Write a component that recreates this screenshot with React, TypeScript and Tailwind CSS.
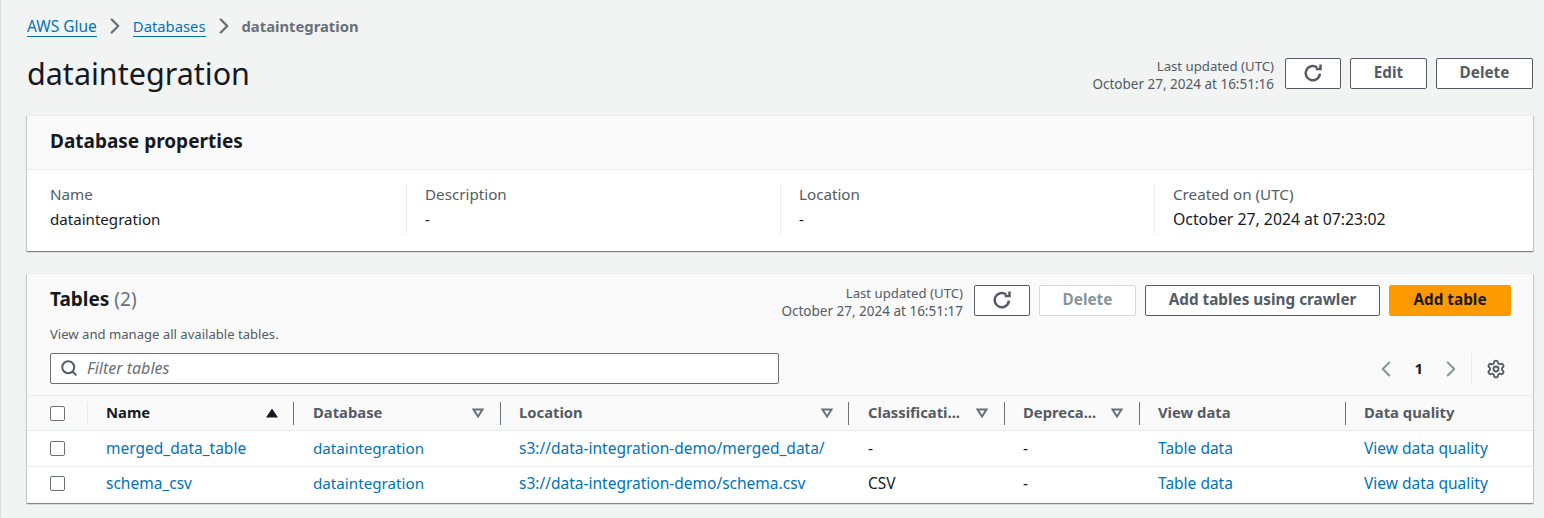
import React from "react"
import { ChevronLeft, ChevronRight, Search, Settings } from "lucide-react"

const columns = [
  { label: "Name", sorted: true, cell: "pl-[18px] pr-[17px]" },
  { label: "Database", cell: "pl-[18px] pr-[18px]" },
  { label: "Location", cell: "pl-[17px] pr-[17px]" },
  { label: "Classificati...", cell: "pl-[18px] pr-[18px]" },
  { label: "Depreca...", cell: "pl-[17px] pr-[18px]" },
  { label: "View data", plain: true, cell: "pl-[17px]" },
  { label: "Data quality", plain: true, last: true, cell: "pl-[17px]" },
]

const rows = [
  { name: "merged_data_table", location: "s3://data-integration-demo/merged_data/", type: "-" },
  { name: "schema_csv", location: "s3://data-integration-demo/schema.csv", type: "CSV" },
]

const gridCols = "grid grid-cols-[61px_207px_207px_348px_156px_135px_206px_1fr]"

function Refresh({ className = "w-[20px] h-[20px]" }: { className?: string }) {
  return (
    <svg viewBox="0 0 16 16" fill="none" stroke="currentColor" strokeWidth="2" className={className}>
      <path d="M13.5 8.5a5.7 5.7 0 1 1-2.2-4.9" />
      <path d="M14 1.2v3.6h-3.8" />
    </svg>
  )
}

function Button({ children, className = "" }: { children: React.ReactNode; className?: string }) {
  return (
    <button className={`h-[31px] mt-[1px] pb-[2px] flex items-center justify-center rounded-[2px] border border-[#545b64] bg-white text-[15.3px] font-bold text-[#545b64] ${className}`}>
      {children}
    </button>
  )
}

function Checkbox() {
  return <span className="block w-[15px] h-[15px] rounded-[2px] border border-[#687078] bg-white" />
}

function Updated({ time, className = "" }: { time: string; className?: string }) {
  return (
    <div className={`text-right leading-[18px] text-[#545b64] ${className}`}>
      <div className="text-[13.2px]">Last updated (UTC)</div>
      <div className="text-[13.5px]">October 27, 2024 at {time}</div>
    </div>
  )
}

function Prop({ label, value, first, valueClass = "text-[15.1px]" }: { label: string; value: string; first?: boolean; valueClass?: string }) {
  return (
    <div className={`h-[50px] ${first ? "" : "border-l border-[#eaeded] pl-[18px]"}`}>
      <div className="text-[15.2px] leading-[22px] text-[#545b64] mt-[-1px]">{label}</div>
      <div className={`leading-[27px] mt-[1px] text-[#16191f] ${valueClass}`}>{value}</div>
    </div>
  )
}

export default function App() {
  return (
    <div className="h-[518px] w-[1544px] overflow-hidden bg-[#f2f3f3] border-l border-[#d5dbdb] pl-[26px] pr-[11px] font-['Noto_Sans','Open_Sans',sans-serif]">
      {/* Breadcrumbs */}
      <nav className="flex items-center h-[22px] pt-[15px] box-content text-[15px] text-[#0073bb]">
        <a className="border-b border-[#0073bb] leading-[20px] text-[15.5px]">AWS Glue</a>
        <ChevronRight className="w-[26px] h-[26px] mx-[5px] text-[#687078]" strokeWidth={2.2} />
        <a className="border-b border-[#0073bb] leading-[20px] text-[14.8px]">Databases</a>
        <ChevronRight className="w-[26px] h-[26px] mx-[5px] text-[#687078]" strokeWidth={2.2} />
        <span className="font-bold text-[14.8px] text-[#687078]">dataintegration</span>
      </nav>

      {/* Page header */}
      <div className="flex items-start justify-between h-[78px]">
        <h1 className="text-[30.5px] leading-[40px] mt-[16px] text-[#16191f]">dataintegration</h1>
        <div className="flex items-start gap-[9px] mt-[20px]">
          <Updated time="16:51:16" className="mr-[2px]" />
          <Button className="w-[56px]"><Refresh /></Button>
          <Button className="w-[77px]">Edit</Button>
          <Button className="w-[97px]">Delete</Button>
        </div>
      </div>

      {/* Database properties */}
      <section className="h-[136px] bg-white shadow-[0_1px_1px_0_rgba(0,28,36,0.3),1px_1px_1px_0_rgba(0,28,36,0.15),-1px_1px_1px_0_rgba(0,28,36,0.15)] border-t border-[#eaeded]">
        <div className="h-[54px] flex items-center px-[23px] pb-[2px] bg-[#fafafa] border-b border-[#eaeded]">
          <h2 className="text-[19px] font-bold text-[#16191f]">Database properties</h2>
        </div>
        <div className="grid grid-cols-[356px_374px_374px_1fr] pl-[23px] pt-[14px]">
          <Prop first label="Name" value="dataintegration" />
          <Prop label="Description" value="-" />
          <Prop label="Location" value="-" />
          <Prop label="Created on (UTC)" value="October 27, 2024 at 07:23:02" valueClass="text-[15.8px]" />
        </div>
      </section>

      {/* Tables */}
      <section className="mt-[22px] h-[230px] bg-white shadow-[0_1px_1px_0_rgba(0,28,36,0.3),1px_1px_1px_0_rgba(0,28,36,0.15),-1px_1px_1px_0_rgba(0,28,36,0.15)] border-t border-[#eaeded]">
        <div className="h-[122px] bg-[#fafafa] pl-[23px] pr-[22px] pt-[10px] border-b border-[#eaeded]">
          <div className="flex items-start justify-between h-[39px]">
            <h2 className="text-[19px] leading-[30px] font-bold text-[#16191f]">
              Tables <span className="font-normal text-[#687078]">(2)</span>
            </h2>
            <div className="flex items-start gap-[9px]">
              <Updated time="16:51:17" className="mr-[2px]" />
              <Button className="w-[56px]"><Refresh /></Button>
              <Button className="w-[97px] !border-[#d5dbdb] !text-[#879596]">Delete</Button>
              <Button className="w-[235px]">Add tables using crawler</Button>
              <Button className="w-[122px] !border-[#ff9900] !bg-[#ff9900] !text-[#16191f]">Add table</Button>
            </div>
          </div>
          <p className="text-[13.1px] leading-[18px] text-[#545b64] mt-[2px]">View and manage all available tables.</p>
          <div className="flex items-center justify-between mt-[10px]">
            <div className="relative w-[729px] h-[31px] pb-[1px] flex items-center rounded-[2px] border border-[#687078] bg-white">
              <Search className="w-[18px] h-[18px] ml-[9px] mr-[9px] text-[#545b64]" strokeWidth={2.6} />
              <span className="text-[16px] italic text-[#687078]">Filter tables</span>
            </div>
            <div className="flex items-center h-[31px] pr-[5px] text-[#879596]">
              <ChevronLeft className="w-[26px] h-[26px]" strokeWidth={1.8} />
              <span className="mx-[15px] text-[15px] font-bold text-[#16191f]">1</span>
              <ChevronRight className="w-[26px] h-[26px]" strokeWidth={1.8} />
              <span className="h-[31px] ml-[7px] mr-[14px] border-l border-[#eaeded]" />
              <Settings className="w-[20px] h-[20px] text-[#545b64]" strokeWidth={2.2} />
            </div>
          </div>
        </div>

        <div className={`${gridCols} h-[35px] bg-[#fafafa] border-b border-[#eaeded] text-[14.8px] font-bold text-[#545b64]`}>
          <div className="flex items-center pl-[23px] relative">
            <Checkbox />
            <span className="absolute right-0 top-[6px] h-[23px] border-r border-[#eaeded]" />
          </div>
          {columns.map((col) => (
            <div key={col.label} className={`flex items-center justify-between relative ${col.cell}`}>
              <span className={`pb-[2px] ${col.sorted ? "text-[#16191f]" : ""}`}>{col.label}</span>
              {!col.plain && (
                <svg viewBox="0 0 12 10" className="w-[12px] h-[10px]">
                  {col.sorted ? (
                    <path d="M6 0.5 L12 9.5 H0 Z" fill="#16191f" />
                  ) : (
                    <path d="M1.5 1.5 H10.5 L6 8.5 Z" fill="none" stroke="#687078" strokeWidth="2" />
                  )}
                </svg>
              )}
              {!col.last && <span className="absolute right-[1px] top-[6px] h-[23px] border-r border-[#687078]" />}
            </div>
          ))}
        </div>

        {rows.map((row, i) => (
          <div key={row.name} className={`${gridCols} h-[36px] items-center text-[15.5px] text-[#0073bb] ${i === 0 ? "border-b border-[#eaeded]" : "pb-[3px]"}`}>
            <div className="pl-[23px]"><Checkbox /></div>
            <div className="pl-[18px]">{row.name}</div>
            <div className="pl-[18px] text-[15.2px]">dataintegration</div>
            <div className="pl-[17px]">{row.location}</div>
            <div className="pl-[18px] text-[#16191f]">{row.type}</div>
            <div className="pl-[17px] text-[#16191f]">-</div>
            <div className="pl-[17px]">Table data</div>
            <div className="pl-[17px]">View data quality</div>
          </div>
        ))}
      </section>
    </div>
  )
}
